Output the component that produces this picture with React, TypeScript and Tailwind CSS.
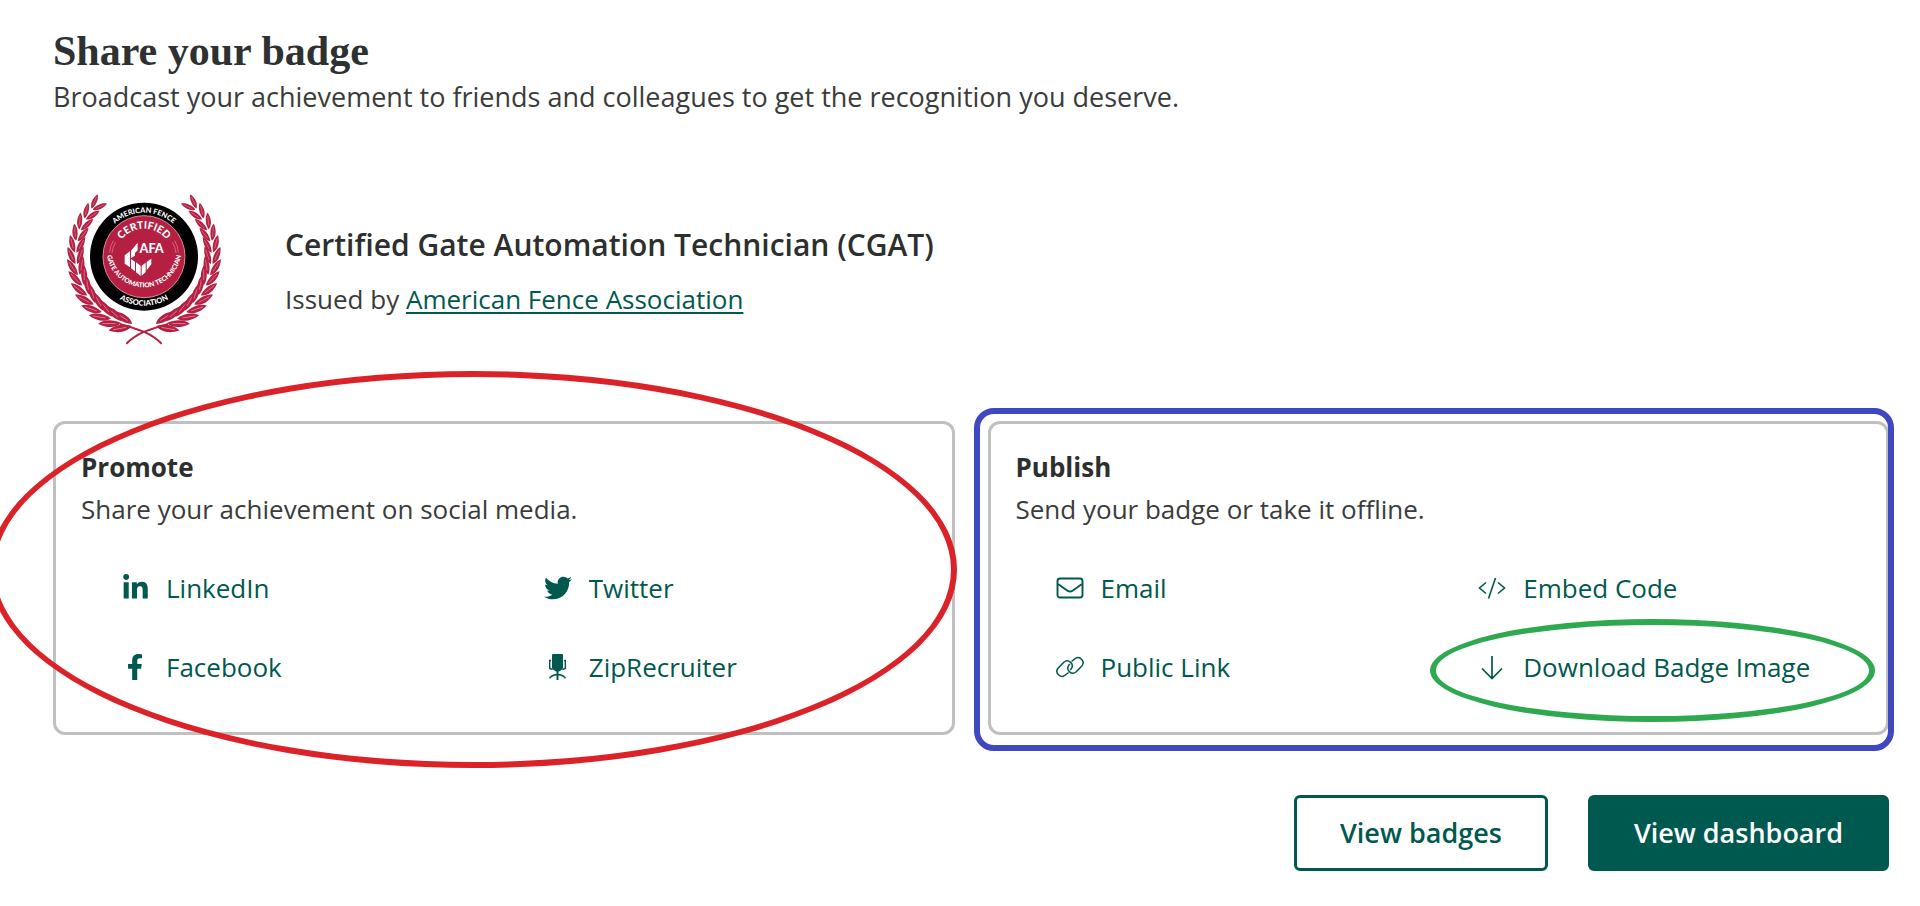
import type { ReactNode } from "react";
import { FaFacebookF, FaLinkedinIn, FaTwitter } from "react-icons/fa";

const crimson = "#b41f42";

function Chair() {
  return (
    <svg viewBox="0 0 28 28" className="h-7 w-7" fill="none" stroke="currentColor">
      <rect x="8" y="1" width="11" height="15" rx="1" fill="currentColor" stroke="none" />
      <path d="M7 7.500H5.700V15.500L8.500 16.500M20 7.500H21.300V15.500L18.500 16.500" strokeWidth="1.400" />
      <path d="M8 16H19L15 18.500H12Z" fill="currentColor" stroke="none" />
      <path d="M13.500 17V27" strokeWidth="2" />
      <path d="M6 25.500V24.500Q9 21.500 13.500 21.500T21 24.500V25.500" strokeWidth="1.400" />
    </svg>
  );
}

function Envelope() {
  return (
    <svg viewBox="0 0 28 28" className="h-7 w-7" fill="none" stroke="currentColor" strokeWidth="1.900">
      <rect x="1.500" y="4.500" width="25" height="19" rx="2.500" />
      <path d="M2 10L11.500 16.700Q14 18.400 16.500 16.700L26 10" />
    </svg>
  );
}

function Chain() {
  return (
    <svg viewBox="0 0 28 28" className="h-7 w-7" fill="none" stroke="currentColor" strokeWidth="1.500">
      <path d="M12.500 19.500L8.800 22.400A5 5 0 0 1 2.200 15L7.800 9.200A5 5 0 0 1 15.300 15.700L14.300 17.200" />
      <path d="M15.500 8.500L19.200 5.600A5 5 0 0 1 25.800 13L20.200 18.800A5 5 0 0 1 12.700 12.300L13.700 10.800" />
    </svg>
  );
}

function Code() {
  return (
    <svg viewBox="0 0 28 28" className="h-7 w-7" fill="none" stroke="currentColor" strokeWidth="1.600">
      <path d="M8 8.500L1.500 14L8 19.500M20 8.500L26.500 14L20 19.500M17.500 4L10.500 24.500" />
    </svg>
  );
}

function ArrowDown() {
  return (
    <svg viewBox="0 0 28 28" className="h-7 w-7" fill="none" stroke="currentColor" strokeWidth="1.700">
      <path d="M14 3V25.500M4 15.500L14 25.500L24 15.500" />
    </svg>
  );
}

const steps = Array.from({ length: 14 }, (_, i) => i);

// One branch, drawn on the left; the badge mirrors it for the right side.
function Branch() {
  return (
    <g fill={crimson}>
      {steps.map((i) => {
        const angle = 12 + i * 9.5;
        const rad = (angle * Math.PI) / 180;
        const r = 198 + Math.max(0, i - 6) * 3;
        const x = 252 - r * Math.sin(rad);
        const y = 226 + r * Math.cos(rad);
        const size = 1.25 - i * 0.032;
        return (
          <g key={i} transform={`translate(${x} ${y}) rotate(${angle + 180}) scale(${size})`}>
            <path d="M-4 -2C4 -19 24 -27 48 -24C39 -9 18 0 -4 -2Z" />
            <path d="M-4 3C4 19 24 27 48 24C39 9 18 0 -4 3Z" />
            <path d="M8 -8L38 -20M8 9L38 20" stroke="#e9a9b6" strokeWidth="1.500" />
          </g>
        );
      })}
      <path d="M305 476C265 437 220 430 180 417" fill="none" stroke={crimson} strokeWidth="6" />
    </g>
  );
}

function Badge() {
  return (
    <svg
      viewBox="-21 -21 552 552"
      className="size-46 shrink-0"
      role="img"
      aria-label="Certified Gate Automation Technician"
      fontFamily="Lato, sans-serif"
      fontWeight="900"
      fill="#fff"
      textAnchor="middle"
    >
      <defs>
        <path id="arc-top" d="M120 215A132 132 0 0 1 384 215" />
        <path id="arc-certified" d="M168 215A84 84 0 0 1 336 215" />
        <path id="arc-gate" d="M140 195A112 112 0 1 0 364 195" />
        <path id="arc-bottom" d="M105 215A147 147 0 0 0 399 215" />
      </defs>
      <Branch />
      <g transform="translate(504 0) scale(-1 1)">
        <Branch />
      </g>
      <circle cx="252" cy="215" r="162" fill="#000" />
      <circle cx="252" cy="215" r="123" fill={crimson} stroke="#df8798" strokeWidth="3" />
      <text fontSize="22">
        <textPath href="#arc-top" startOffset="50%">AMERICAN FENCE</textPath>
      </text>
      <text fontSize="31">
        <textPath href="#arc-certified" startOffset="50%">CERTIFIED</textPath>
      </text>
      <text fontSize="20">
        <textPath href="#arc-gate" startOffset="50%">GATE AUTOMATION TECHNICIAN</textPath>
      </text>
      <text fontSize="23">
        <textPath href="#arc-bottom" startOffset="50%">ASSOCIATION</textPath>
      </text>
      <path d="M149 203Q150 183 160 167M156 204Q158 185 167 172M355 203Q354 183 344 167M348 204Q346 185 337 172" fill="none" stroke="#df8798" strokeWidth="2" />
      <text x="275" y="203" fontSize="38">AFA</text>
      <path d="M194 211L210 199V247L194 236ZM213 197L233 173V196L225 204V212L213 219ZM213 222L225 230V259L213 250ZM228 232L242 242V273L228 262ZM245 242L257 233V261L245 272ZM260 231L274 221V238L260 256Z" />
    </svg>
  );
}

type Action = { label: string; icon: ReactNode; circled?: boolean };

const promote: Action[] = [
  { label: "LinkedIn", icon: <FaLinkedinIn className="h-7 w-[25px]" /> },
  { label: "Twitter", icon: <FaTwitter className="size-7" /> },
  { label: "Facebook", icon: <FaFacebookF className="h-[26px] w-7" /> },
  { label: "ZipRecruiter", icon: <Chair /> },
];

const publish: Action[] = [
  { label: "Email", icon: <Envelope /> },
  { label: "Embed Code", icon: <Code /> },
  { label: "Public Link", icon: <Chain /> },
  { label: "Download Badge Image", icon: <ArrowDown />, circled: true },
];

function Panel({ title, text, actions, children }: { title: string; text: string; actions: Action[]; children: ReactNode }) {
  return (
    <section className="relative">
      <div className="rounded-xl border-3 border-[#c0c0c0] px-[25px] pt-[22px] pb-[26px]">
        <h3 className="font-bold text-[#2d2f2f]">{title}</h3>
        <p>{text}</p>
        <ul className="mt-[18px] grid grid-cols-2">
          {actions.map((action) => (
            <li key={action.label} className="relative flex h-[79px] items-center pl-10">
              <a href="#" className="flex items-center gap-[17px] whitespace-nowrap text-[#00594f]">
                <span className="flex w-7 justify-center">{action.icon}</span>
                {action.label}
              </a>
              {action.circled && (
                <span className="pointer-events-none absolute -top-2 -right-[14px] -bottom-4 -left-2 rounded-[50%] border-6 border-[#2ea94f]" />
              )}
            </li>
          ))}
        </ul>
      </div>
      {children}
    </section>
  );
}

export default function App() {
  return (
    <main className="overflow-x-clip bg-white pt-[26px] pr-[31px] pb-9 pl-[53px] font-['Open_Sans',sans-serif] text-[26px] leading-[42px] text-[#3a3c3c]">
      <h1 className="font-['Liberation_Serif',serif] text-[42px] leading-[50px] font-bold text-[#2d3132]">Share your badge</h1>
      <p className="text-[27px]">Broadcast your achievement to friends and colleagues to get the recognition you deserve.</p>

      <div className="mt-[60px] flex items-center gap-12">
        <Badge />
        <div className="flex flex-col gap-3 pt-1">
          <h2 className="text-[30px] font-semibold text-[#2d2f2f]">Certified Gate Automation Technician (CGAT)</h2>
          <p>
            Issued by{" "}
            <a href="#" className="text-[#00594f] underline decoration-2 underline-offset-3">
              American Fence Association
            </a>
          </p>
        </div>
      </div>

      <div className="mt-[59px] grid grid-cols-2 gap-[33px]">
        <Panel title="Promote" text="Share your achievement on social media." actions={promote}>
          <span className="pointer-events-none absolute -top-[50px] -right-[2px] -bottom-[33px] -left-[64px] rounded-[50%] border-6 border-[#dc2229]" />
        </Panel>
        <Panel title="Publish" text="Send your badge or take it offline." actions={publish}>
          <span className="pointer-events-none absolute -top-[13px] -right-[5px] -bottom-4 -left-[14px] rounded-[20px] border-6 border-[#3f48c0]" />
        </Panel>
      </div>

      <div className="mt-[60px] flex justify-end gap-10 text-[27px] font-semibold">
        <button type="button" className="h-[76px] rounded-md border-3 border-[#00594f] px-[43px] text-[#00594f]">
          View badges
        </button>
        <button type="button" className="h-[76px] rounded-md border-3 border-[#00594f] bg-[#00594f] px-[43px] text-white">
          View dashboard
        </button>
      </div>
    </main>
  );
}
